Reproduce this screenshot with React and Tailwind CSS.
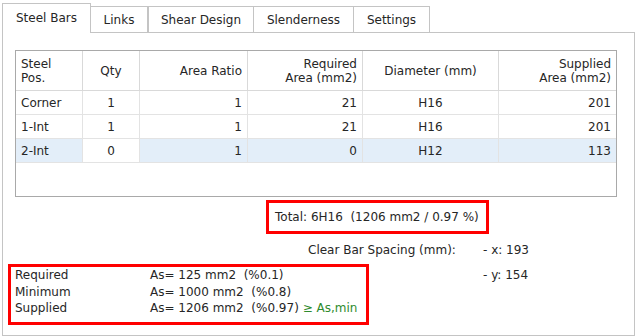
import React from "react";

const cols = ["w-[67px]", "w-[57px]", "w-[108px]", "w-[115px]", "w-[136px]", "w-[117px]"];

const header = [
  { t: ["Steel", "Pos."], a: "justify-start text-left pl-[5px]" },
  { t: ["Qty"], a: "justify-center text-center" },
  { t: ["Area Ratio"], a: "justify-end text-right pr-[5px]" },
  { t: ["Required", "Area (mm2)"], a: "justify-end text-right pr-[5px]" },
  { t: ["Diameter (mm)"], a: "justify-center text-center" },
  { t: ["Supplied", "Area (mm2)"], a: "justify-end text-right pr-[5px]" },
];

const align = [
  "justify-start pl-[5px]",
  "justify-center",
  "justify-end pr-[5px]",
  "justify-end pr-[5px]",
  "justify-center",
  "justify-end pr-[5px]",
];

const rows = [
  { c: ["Corner", "1", "1", "21", "H16", "201"], sel: false },
  { c: ["1-Int", "1", "1", "21", "H16", "201"], sel: false },
  { c: ["2-Int", "0", "1", "0", "H12", "113"], sel: true },
];

export default function App() {
  return (
    <div
      className="w-[639px] h-[336px] bg-white text-[#262626] text-[12px] overflow-hidden"
      style={{ fontFamily: '"DejaVu Sans", Verdana, sans-serif' }}
    >
      <div className="pl-[2px] pt-[3px]">
        {/* tabs */}
        <div className="relative z-10 flex h-[30px] -mb-[1px]">
          <div className="w-[89px] h-[30px] border-l border-t border-r border-[#c4c4c4] bg-white flex items-start justify-center pt-[8px]">
            <span className="leading-none">Steel Bars</span>
          </div>
          <div className="flex items-end">
            <div className="w-[57px] h-[27px] border border-[#c4c4c4] border-l-0 bg-white flex items-center justify-center">
              <span className="leading-none">Links</span>
            </div>
            <div className="w-[106px] h-[27px] border border-[#c4c4c4] bg-white flex items-center justify-center">
              <span className="leading-none">Shear Design</span>
            </div>
            <div className="w-[100px] h-[27px] border border-[#c4c4c4] border-l-0 bg-white flex items-center justify-center">
              <span className="leading-none">Slenderness</span>
            </div>
            <div className="w-[76px] h-[27px] border border-[#c4c4c4] border-l-0 bg-white flex items-center justify-center">
              <span className="leading-none">Settings</span>
            </div>
          </div>
        </div>

        {/* panel */}
        <div className="w-[633px] h-[304px] border border-[#c4c4c4] bg-white flex flex-col">
          {/* table */}
          <div className="ml-[12px] mt-[17px] w-[602px] h-[147px] border border-[#a9a9a9] flex flex-col">
            <div className="flex h-[40px] border-b border-[#d9d9d9]">
              {header.map((h, i) => (
                <div
                  key={i}
                  className={`${cols[i]} ${i < 5 ? "border-r border-[#d9d9d9]" : ""} flex items-center ${h.a}`}
                >
                  <div className="leading-[14px]">
                    {h.t.map((l, j) => (
                      <div key={j}>{l}</div>
                    ))}
                  </div>
                </div>
              ))}
            </div>
            {rows.map((r, ri) => (
              <div key={ri} className="flex h-[24px] border-b border-[#e3e3e3]">
                {r.c.map((c, i) => (
                  <div
                    key={i}
                    className={`${cols[i]} ${i < 5 ? "border-r border-[#e3e3e3]" : ""} flex items-center ${align[i]} ${
                      r.sel && i !== 1 ? "bg-[#e3eef9]" : "bg-white"
                    }`}
                  >
                    {c}
                  </div>
                ))}
              </div>
            ))}
          </div>

          {/* total */}
          <div className="ml-[263px] mt-[3px] w-[223px] h-[34px] border-[3px] border-[#ff0000] flex items-center pl-[6px] whitespace-pre">
            Total: 6H16  (1206 mm2 / 0.97 %)
          </div>

          {/* clear bar spacing */}
          <div className="flex mt-[8px] h-[16px] leading-[16px]">
            <div className="ml-[305px] w-[175px]">Clear Bar Spacing (mm):</div>
            <div>- x: 193</div>
          </div>

          {/* bottom block */}
          <div className="flex mt-[6px]">
            <div className="ml-[5px] w-[361px] h-[61px] border-[3px] border-[#ff0000] pl-[4px] leading-[16.5px]">
              <div className="flex">
                <span className="w-[135px]">Required</span>
                <span className="whitespace-pre">As= 125 mm2  (%0.1)</span>
              </div>
              <div className="flex">
                <span className="w-[135px]">Minimum</span>
                <span className="whitespace-pre">As= 1000 mm2  (%0.8)</span>
              </div>
              <div className="flex">
                <span className="w-[135px]">Supplied</span>
                <span className="whitespace-pre">
                  As= 1206 mm2  (%0.97) <span className="text-[#2e8b2e]">≥ As,min</span>
                </span>
              </div>
            </div>
            <div className="ml-[114px] mt-[3px] leading-[16px]">- y: 154</div>
          </div>
        </div>
      </div>
    </div>
  );
}
